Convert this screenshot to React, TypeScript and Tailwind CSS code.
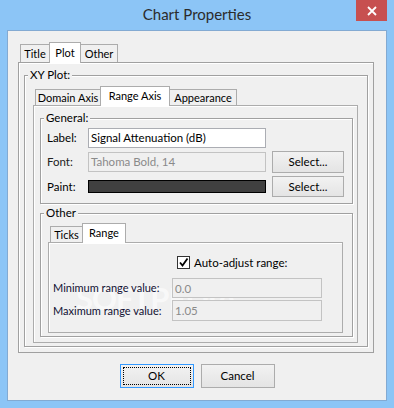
import React from "react";

const ui = "font-[Lato,'Liberation_Sans',sans-serif]";

function Tab({ label, active, width, first, small }: { label: string; active?: boolean; width: number; first?: boolean; small?: boolean }) {
  const h = small ? (active ? "h-[20px]" : "h-[16px]") : active ? "h-[21px]" : "h-[18px]";
  return (
    <div
      style={{ width }}
      className={`relative flex items-center justify-center whitespace-nowrap border-x border-t border-[#acacac] text-[11px] leading-none text-black ${h} ${
        first ? "" : "-ml-px"
      } ${active ? "z-10 -mb-px bg-white pb-[2px]" : "bg-[#f0f0f0]"}`}
    >
      {label}
    </div>
  );
}

function Group({ title, className, children }: { title: string; className?: string; children?: React.ReactNode }) {
  return (
    <div className={`relative border border-[#a0a0a0] shadow-[inset_1px_1px_0_#fff,1px_1px_0_#fff] ${className ?? ""}`}>
      <span className="absolute -top-[8px] left-[3px] bg-[#f0f0f0] px-[2px] text-[11.5px] leading-[14px] text-black">{title}</span>
      {children}
    </div>
  );
}

function Btn({ label, focused, w = 74, h = 24 }: { label: string; focused?: boolean; w?: number; h?: number }) {
  return (
    <div
      style={{ width: w, height: h }}
      className={`flex border bg-gradient-to-b from-[#f2f2f2] to-[#e4e4e4] p-[2px] text-[11.5px] text-black ${
        focused ? "border-[#3399ff]" : "border-[#acacac]"
      }`}
    >
      <div className={`flex flex-1 items-center justify-center border ${focused ? "border-dotted border-black" : "border-transparent"}`}>{label}</div>
    </div>
  );
}

function Field({ value, disabled, w, h = 20 }: { value: string; disabled?: boolean; w: number; h?: number }) {
  return (
    <div
      style={{ width: w, height: h }}
      className={`flex items-center border px-[2px] text-[11.5px] ${
        disabled ? "border-[#c3c3c3] bg-[#f0f0f0] text-[#8a8a8a]" : "border-[#abadb3] bg-white text-black"
      }`}
    >
      {value}
    </div>
  );
}

export default function App() {
  return (
    <div className={`relative h-[408px] w-[394px] overflow-hidden bg-[#8cc5f6] ${ui}`}>
      {/* title bar */}
      <div className="relative flex h-[30px] items-center justify-center pb-[1px] text-[15px] text-[#2b2b2b]">
        Chart Properties
        <div className="absolute right-[7px] top-0 flex h-[21px] w-[31px] items-center justify-center bg-[#c75050]">
          <svg width="10" height="10" viewBox="0 0 10 10">
            <path d="M1 1L9 9M9 1L1 9" stroke="#fff" strokeWidth="1.8" />
          </svg>
        </div>
      </div>

      {/* client area */}
      <div className="mx-[7px] flex h-[371px] flex-col border border-[#83aad2] bg-[#f0f0f0] pt-[11px]">
        <div className="flex items-end pl-[12px]">
          <Tab label="Title" width={30} first />
          <Tab label="Plot" width={32} active />
          <Tab label="Other" width={38} />
        </div>
        <div className="ml-[10px] h-[291px] w-[356px] border border-[#a0a0a0] px-[5px] pb-[5px] pt-[12px] shadow-[inset_1px_1px_0_#fff]">
          <Group title="XY Plot:" className="flex h-full flex-col pl-[8px] pr-[9px] pt-[10px]">
            <div className="flex items-end pl-[2px]">
              <Tab label="Domain Axis" width={66} first small />
              <Tab label="Range Axis" width={70} active small />
              <Tab label="Appearance" width={68} small />
            </div>
            <div className="flex h-[238px] w-[325px] flex-col border border-[#acacac] pb-[5px] pl-[6px] pr-[4px] pt-[12px] shadow-[inset_1px_1px_0_#fff]">
              <Group title="General:" className="h-[86px] pl-[6px] pt-[9px]">
                <div className="flex items-center">
                  <span className="w-[41px] text-[11.5px] text-black">Label:</span>
                  <Field value="Signal Attenuation (dB)" w={178} />
                </div>
                <div className="mt-[3px] flex items-center">
                  <span className="w-[41px] text-[11.5px] text-[#222]">Font:</span>
                  <Field value="Tahoma Bold, 14" disabled w={178} />
                  <div className="ml-[6px]">
                    <Btn label="Select..." w={72} h={22} />
                  </div>
                </div>
                <div className="mt-[3px] flex items-center">
                  <span className="w-[41px] text-[11.5px] text-black">Paint:</span>
                  <div className="h-[13px] w-[178px] border border-black bg-[#404040]" />
                  <div className="ml-[6px]">
                    <Btn label="Select..." w={72} h={21} />
                  </div>
                </div>
              </Group>
              <Group title="Other" className="mt-[9px] flex flex-1 flex-col pb-[3px] pl-[7px] pr-[9px] pt-[9px]">
                <div className="flex items-end pl-[2px]">
                  <Tab label="Ticks" width={33} first small />
                  <Tab label="Range" width={44} active small />
                </div>
                <div className="relative flex flex-1 flex-col border border-[#acacac] pl-[4px] pt-[11px] shadow-[inset_1px_1px_0_#fff]">
                  {/* watermark */}
                  <div className="pointer-events-none absolute left-[27px] top-[40px] text-[31px] font-bold leading-none tracking-[-1px] text-white/60">
                    SOFTPEDIA<sup className="text-[8px]">®</sup>
                  </div>
                  <div className="relative flex items-center">
                    <div className="w-[124px]" />
                    <div className="flex h-[13px] w-[13px] items-center justify-center border border-[#333] bg-white">
                      <svg width="11" height="11" viewBox="0 0 11 11">
                        <path d="M2 5.5L4.5 8.5L9.5 1.5" fill="none" stroke="#000" strokeWidth="1.8" />
                      </svg>
                    </div>
                    <span className="ml-[4px] text-[11.5px] text-black">Auto-adjust range:</span>
                  </div>
                  <div className="relative mt-[7px] flex items-center">
                    <span className="w-[119px] whitespace-nowrap text-[11px] text-[#111133]">Minimum range value:</span>
                    <Field value="0.0" disabled w={150} />
                  </div>
                  <div className="relative mt-[2px] flex items-center">
                    <span className="w-[119px] whitespace-nowrap text-[11px] text-[#111133]">Maximum range value:</span>
                    <Field value="1.05" disabled w={150} h={21} />
                  </div>
                </div>
              </Group>
            </div>
          </Group>
        </div>
        <div className="mt-[11px] flex justify-center gap-[7px]">
          <Btn label="OK" focused />
          <Btn label="Cancel" />
        </div>
      </div>
    </div>
  );
}
